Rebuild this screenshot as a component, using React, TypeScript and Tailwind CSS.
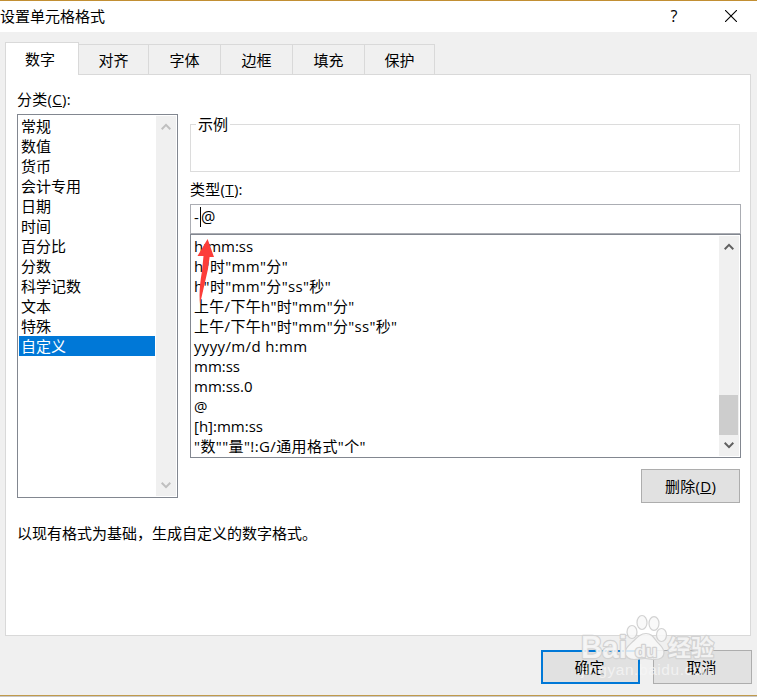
import { clsx } from "clsx";

const TABS = [
  { label: "数字", width: "w-[74px]" },
  { label: "对齐", width: "w-[70px]" },
  { label: "字体", width: "w-[72px]" },
  { label: "边框", width: "w-[72px]" },
  { label: "填充", width: "w-[72px]" },
  { label: "保护", width: "w-[70px]" },
];

const CATEGORIES = [
  "常规",
  "数值",
  "货币",
  "会计专用",
  "日期",
  "时间",
  "百分比",
  "分数",
  "科学记数",
  "文本",
  "特殊",
  "自定义",
];

const FORMATS = [
  { code: "h:mm:ss", tracking: "tracking-normal" },
  { code: 'h"时"mm"分"', tracking: "tracking-[0.35px]" },
  { code: 'h"时"mm"分"ss"秒"', tracking: "tracking-[0.35px]" },
  { code: '上午/下午h"时"mm"分"', tracking: "tracking-[0.3px]" },
  { code: '上午/下午h"时"mm"分"ss"秒"', tracking: "tracking-[0.3px]" },
  { code: "yyyy/m/d h:mm", tracking: "tracking-[0.35px]" },
  { code: "mm:ss", tracking: "tracking-normal" },
  { code: "mm:ss.0", tracking: "tracking-normal" },
  { code: "@", tracking: "tracking-normal" },
  { code: "[h]:mm:ss", tracking: "tracking-normal" },
  { code: '"数""量"!:G/通用格式"个"', tracking: "tracking-[0.4px]" },
];

function Chevron({ down, muted }: { down?: boolean; muted?: boolean }) {
  return (
    <svg
      viewBox="0 0 10 8"
      className={clsx(
        "h-2 w-2.5 shrink-0",
        down && "rotate-180",
        muted ? "text-[#bfbfbf]" : "text-[#606060]"
      )}
    >
      <path
        d="M0.7 6.2 5 1.9 9.3 6.2"
        fill="none"
        stroke="currentColor"
        strokeWidth="2"
      />
    </svg>
  );
}

function TitleBar() {
  return (
    <header className="flex h-8 shrink-0 items-center border-t border-[#c28f33] bg-white">
      <h1 className="flex-1 pb-0.5">设置单元格格式</h1>
      <span className="mr-[47px] w-2 pb-0.5 text-center text-[16px] leading-5">
        ?
      </span>
      <svg viewBox="0 0 12 12" className="mr-5 mb-px h-3 w-3">
        <path d="M0 0 12 12M12 0 0 12" stroke="#000" strokeWidth="1.1" />
      </svg>
    </header>
  );
}

function TabStrip() {
  return (
    <nav className="flex h-8 items-end">
      {TABS.map((tab, i) => (
        <button
          key={tab.label}
          type="button"
          className={clsx(
            "flex shrink-0 items-center justify-center border-[#d9d9d9]",
            tab.width,
            i === 0
              ? "z-10 -mb-px h-[33px] border border-b-0 bg-white pr-1"
              : "h-[30px] border-t border-r bg-[#f0f0f0]"
          )}
        >
          {tab.label}
        </button>
      ))}
    </nav>
  );
}

function CategoryList() {
  return (
    <div className="flex h-[384px] border border-[#828790] bg-white p-px">
      <ul className="flex-1">
        {CATEGORIES.map((name) => (
          <li
            key={name}
            className={clsx(
              "h-5 pl-0.5 leading-5",
              name === "自定义" && "mr-px bg-[#0078d7] text-white"
            )}
          >
            {name}
          </li>
        ))}
      </ul>
      <div className="flex w-5 flex-col items-center justify-between bg-[#f0f0f0] py-[7px] pr-px">
        <Chevron muted />
        <Chevron muted down />
      </div>
    </div>
  );
}

function FormatList() {
  return (
    <div className="flex h-[224px] border border-[#828790] bg-white p-px">
      <ul className="flex-1 pl-0.5">
        {FORMATS.map(({ code, tracking }) => (
          <li
            key={code}
            className={clsx("h-5 leading-5 whitespace-pre", tracking)}
          >
            {code}
          </li>
        ))}
      </ul>
      <div className="flex w-5 flex-col items-center bg-[#f0f0f0] py-[7px] pr-px">
        <Chevron />
        <div className="mt-[144px] mb-[6px] h-10 w-[19px] shrink-0 self-start bg-[#cdcdcd]" />
        <Chevron down />
      </div>
    </div>
  );
}

function RedArrow() {
  return (
    <svg
      viewBox="0 0 20 66"
      className="absolute top-[34px] left-[6px] h-[66px] w-5"
    >
      <path
        d="M10.6 0 17 18H12.6L11 30 3 65Q1.5 52 5 32L6.5 17H0.5Z"
        fill="#fc3d39"
      />
    </svg>
  );
}

function Watermark() {
  return (
    <svg
      viewBox="0 0 150 89"
      className="pointer-events-none absolute top-[608px] left-[575px] h-[89px] w-[150px]"
    >
      <g
        fill="#f8f8f8"
        fillOpacity="0.85"
        stroke="#d2d2d2"
        strokeWidth="1.2"
        strokeLinejoin="round"
      >
        <ellipse cx="57" cy="24" rx="5" ry="6.500" />
        <ellipse cx="67" cy="14.500" rx="5" ry="7" />
        <ellipse cx="79" cy="15.500" rx="5" ry="6.800" />
        <ellipse cx="86.500" cy="27" rx="5" ry="6.500" />
        <path d="M71 25.500c5 0 7 3 10 7s8 7 8 12-4 7-9 7-7-1-10-1-7 1-11 1-9-2-9-7 5-8 9-12 7-7 12-7Z" />
        <g paintOrder="stroke" strokeWidth="2.4">
          <text
            x="6"
            y="49.500"
            fontSize="31"
            fontWeight="700"
            textLength="46"
            lengthAdjust="spacingAndGlyphs"
            className="font-['Liberation_Sans',sans-serif]"
          >
            Bai
          </text>
          <text
            x="60"
            y="48.500"
            fontSize="17"
            fontWeight="700"
            textLength="22"
            lengthAdjust="spacingAndGlyphs"
            className="font-['Liberation_Sans',sans-serif]"
          >
            du
          </text>
          <text
            x="93"
            y="48"
            fontSize="23"
            fontWeight="700"
            className="font-['Noto_Sans_CJK_SC',sans-serif]"
          >
            经验
          </text>
        </g>
      </g>
      <text
        x="6"
        y="67"
        fontSize="15.500"
        fill="#f6f6f6"
        fillOpacity="0.8"
        textLength="134"
        className="font-['Liberation_Sans',sans-serif]"
      >
        jingyan.baidu.com
      </text>
    </svg>
  );
}

export default function App() {
  return (
    <div className="relative flex h-[697px] w-[757px] flex-col overflow-hidden bg-[#f0f0f0] font-['Open_Sans','Noto_Sans_CJK_SC',sans-serif] text-[15px] leading-5 text-black">
      <TitleBar />
      <div className="mt-[10px] ml-[5px] w-[746px]">
        <TabStrip />
        <main className="h-[562px] border border-[#d9d9d9] bg-white pt-[14px] pl-[11px]">
          <div className="flex gap-3">
            <section className="w-[161px]">
              <label className="mb-[5px] block h-5 tracking-[0.3px]">
                分类(<u>C</u>):
              </label>
              <CategoryList />
            </section>
            <section className="w-[551px] pt-[26px]">
              <fieldset className="relative mt-[9px] mr-px h-12 border border-[#dcdcdc]">
                <span className="absolute -top-[11px] left-[5px] bg-white px-0.5 leading-5">
                  示例
                </span>
              </fieldset>
              <label className="mt-[7px] mb-[5px] block h-5 tracking-[0.3px]">
                类型(<u>T</u>):
              </label>
              <div className="relative flex h-[30px] items-center border border-[#abadb3] pb-1 pl-[3px]">
                <span className="w-[6px]">-</span>
                <span className="h-5 w-px bg-black" />
                <span className="text-[16px]">@</span>
                <RedArrow />
              </div>
              <FormatList />
              <button
                type="button"
                className="mt-[11px] mr-px ml-auto flex h-[34px] w-[99px] items-center justify-center border border-[#adadad] bg-[#e1e1e1] tracking-[0.3px]"
              >
                删除(<u>D</u>)
              </button>
            </section>
          </div>
          <p className="mt-5">以现有格式为基础，生成自定义的数字格式。</p>
        </main>
      </div>
      <footer className="mt-[14px] mr-[5px] flex justify-end gap-[13px]">
        <button
          type="button"
          className="h-[34px] w-[99px] border-2 border-[#0078d7] bg-[#e1e1e1] pr-0.5"
        >
          确定
        </button>
        <button
          type="button"
          className="h-[34px] w-[99px] border border-[#adadad] bg-[#e1e1e1] pr-0.5"
        >
          取消
        </button>
      </footer>
      <div className="mt-auto h-0.5 shrink-0 border-t border-[#c09a4c] bg-[#c8c8c8]" />
      <Watermark />
    </div>
  );
}
